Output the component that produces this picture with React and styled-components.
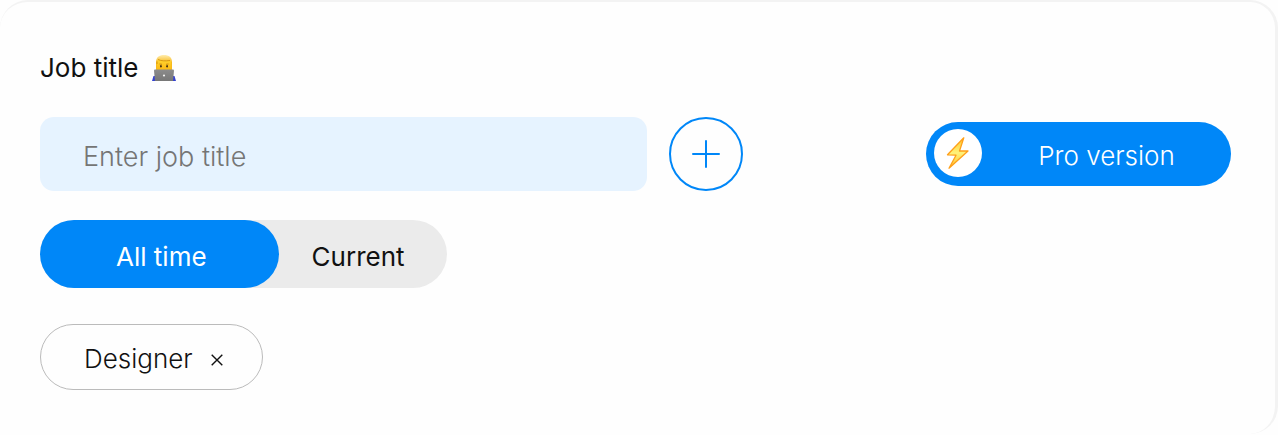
import React, { useState } from 'react'
import styled, { createGlobalStyle } from 'styled-components';

const MAIN_COLOR = '#0087f8';
const TEXT_COLOR = '#111111';

function App() {
  const [period, setPeriod] = useState('all');
  const [title, setTitle] = useState('');
  const [tags, setTags] = useState(['Designer']);

  const addTag = () => {
    if (title.trim()) {
      setTags([...tags, title.trim()]);
      setTitle('');
    }
  };

  return (
    <>
      <GlobalStyle />
      <Card>
        <Label htmlFor="job-title">
          Job title
          <WorkerIcon />
        </Label>

        <SearchRow>
          <TitleInput
            id="job-title"
            placeholder="Enter job title"
            value={title}
            onChange={(e) => setTitle(e.target.value)}
          />
          <AddButton type="button" aria-label="Add job title" onClick={addTag}>
            <svg width="28" height="28" viewBox="0 0 28 28" fill="none" stroke="currentColor" strokeWidth="2" strokeLinecap="round">
              <path d="M14 1v26M1 14h26" />
            </svg>
          </AddButton>
          <ProButton type="button">
            <ProBadge><BoltIcon /></ProBadge>
            <ProText>Pro version</ProText>
          </ProButton>
        </SearchRow>

        <Toggle>
          <ToggleButton type="button" $active={period === 'all'} onClick={() => setPeriod('all')}>
            All time
          </ToggleButton>
          <ToggleButton type="button" $active={period === 'current'} onClick={() => setPeriod('current')}>
            Current
          </ToggleButton>
        </Toggle>

        <TagList>
          {tags.map((tag) => (
            <Tag key={tag}>
              {tag}
              <RemoveButton type="button" aria-label={`Remove ${tag}`} onClick={() => setTags(tags.filter((t) => t !== tag))}>
                <svg width="12" height="12" viewBox="0 0 12 12" fill="none" stroke="currentColor" strokeWidth="1.4">
                  <path d="M.7.7l10.6 10.6M11.3.7L.7 11.3" />
                </svg>
              </RemoveButton>
            </Tag>
          ))}
        </TagList>
      </Card>
    </>
  )
}

function WorkerIcon() {
  return (
    <svg width="24" height="26" viewBox="0 0 24 26" aria-hidden="true">
      <defs>
        <linearGradient id="face" x1="0" y1="0" x2="0" y2="1">
          <stop offset="0" stopColor="#ffd531" />
          <stop offset="1" stopColor="#fdb913" />
        </linearGradient>
        <linearGradient id="hair" x1="0" y1="0" x2="0" y2="1">
          <stop offset="0" stopColor="#ffedb0" />
          <stop offset=".5" stopColor="#f7b91c" />
        </linearGradient>
        <linearGradient id="laptop" x1="0" y1="0" x2="0" y2="1">
          <stop offset="0" stopColor="#8c8c8c" />
          <stop offset="1" stopColor="#777777" />
        </linearGradient>
      </defs>
      <path d="M0 26l1.500-5h21l1.500 5z" fill="#3341d0" />
      <path d="M4 7C4 2.500 7 0 12 0s8 2.500 8 7v8H4z" fill="url(#hair)" />
      <path d="M5 7.500c0-2 1-3 2-3 3 1.300 7 1.500 11 1 1 .5 1.200 1.500 1.200 3V15H5z" fill="url(#face)" />
      <path d="M6 4.500c3 1.500 7 1.700 12 1M5 9V6.500" fill="none" stroke="#d2920f" strokeWidth=".9" />
      <path d="M7.500 9l2.500.3M16.500 9l-2.500.3" stroke="#b87a0c" strokeWidth=".8" />
      <ellipse cx="8.900" cy="11.200" rx=".9" ry="1.200" fill="#493315" />
      <ellipse cx="15.100" cy="11.200" rx=".9" ry="1.200" fill="#493315" />
      <path d="M3 14.500h18a1 1 0 0 1 1 1L21 26H3L2 15.500a1 1 0 0 1 1-1z" fill="url(#laptop)" />
      <circle cx="12" cy="20.500" r="1.100" fill="#f2f2f2" />
    </svg>
  )
}

function BoltIcon() {
  return (
    <svg width="24" height="32" viewBox="0 0 24 32" aria-hidden="true">
      <defs>
        <linearGradient id="bolt" x1="0" y1="0" x2="0" y2="1">
          <stop offset="0" stopColor="#ffc92e" />
          <stop offset=".5" stopColor="#fff27a" />
          <stop offset="1" stopColor="#ffc02a" />
        </linearGradient>
      </defs>
      <path d="M17.800 .8L1.500 17.800l8.500.4L3 31.200 22 14h-8.500z" fill="url(#bolt)" stroke="#ffa01a" strokeWidth="1.300" strokeLinejoin="round" />
    </svg>
  )
}

const GlobalStyle = createGlobalStyle`
  * {
    box-sizing: border-box;
  }

  body {
    margin: 0;
    background: #fefefe;
    color: ${TEXT_COLOR};
    font-family: Inter, 'Liberation Sans', sans-serif;
    font-size: 26px;
    font-weight: 400;
  }

  button, input {
    font: inherit;
    color: inherit;
    border: none;
    padding: 0;
    margin: 0;
  }

  button {
    cursor: pointer;
  }
`;

const Card = styled.main`
  padding: 50px 44px 44px 40px;
  border-top: 2px solid #f3f3f3;
  border-right: 3px solid #f3f3f3;
  border-radius: 28px;
`;

const Label = styled.label`
  display: flex;
  align-items: center;
  gap: 14px;
  width: fit-content;
  line-height: 32px;
`;

const SearchRow = styled.div`
  display: flex;
  align-items: center;
  gap: 22px;
  margin-top: 33px;
`;

const TitleInput = styled.input`
  flex: 0 1 607px;
  min-width: 0;
  height: 74px;
  padding: 4px 44px 0 43px;
  border-radius: 14px;
  background: #e6f3ff;
  font-size: 27px;
  font-weight: 300;

  &::placeholder {
    color: #757575;
    opacity: 1;
  }
`;

const AddButton = styled.button`
  display: flex;
  flex-shrink: 0;
  align-items: center;
  justify-content: center;
  width: 74px;
  height: 74px;
  border: 2px solid ${MAIN_COLOR};
  border-radius: 50%;
  background: none;
  color: ${MAIN_COLOR};
`;

const ProButton = styled.button`
  display: flex;
  flex: 0 0 305px;
  align-items: center;
  height: 64px;
  margin-left: auto;
  padding: 0 8px 2px;
  border-radius: 32px;
  background: ${MAIN_COLOR};
  color: #ffffff;
  font-weight: 300;
`;

const ProBadge = styled.span`
  display: flex;
  flex-shrink: 0;
  align-items: center;
  justify-content: center;
  width: 48px;
  height: 48px;
  border-radius: 50%;
  background: #ffffff;
`;

const ProText = styled.span`
  flex: 1;
  padding: 4px 0 0 8px;
`;

const Toggle = styled.div`
  display: flex;
  width: fit-content;
  margin-top: 29px;
  border-radius: 34px;
  background: #ebebeb;
`;

const ToggleButton = styled.button`
  height: 68px;
  padding: ${(props) => (props.$active ? '4px 72px 0 76px' : '4px 42px 0 33px')};
  border-radius: 34px;
  background: ${(props) => (props.$active ? MAIN_COLOR : 'none')};
  color: ${(props) => (props.$active ? '#ffffff' : TEXT_COLOR)};
`;

const TagList = styled.div`
  display: flex;
  flex-wrap: wrap;
  gap: 16px;
  margin-top: 36px;
`;

const Tag = styled.span`
  display: flex;
  align-items: center;
  gap: 18px;
  height: 66px;
  padding: 2px 39px 0 43px;
  border: 1px solid #bbbbbb;
  border-radius: 33px;
  font-weight: 300;
`;

const RemoveButton = styled.button`
  display: flex;
  padding-top: 4px;
  background: none;
`;

export default App
